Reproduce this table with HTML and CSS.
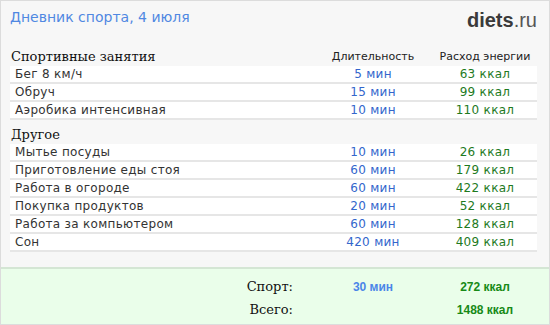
FILE: index.html
```html
<!DOCTYPE html>
<html lang="ru">
<head>
<meta charset="utf-8">
<title>Дневник спорта</title>
<link rel="stylesheet" href="styles.css">
</head>
<body>
<div class="page">
  <div class="top">
    <div class="title">Дневник спорта, 4 июля</div>
    <div class="logo"><b>diets</b>.ru</div>
  </div>

  <div class="section">
    <div class="head">
      <div class="head-name">Спортивные занятия</div>
      <div class="col">Длительность</div>
      <div class="col">Расход энергии</div>
    </div>
    <div class="row"><div class="name">Бег 8 км/ч</div><div class="dur">5 мин</div><div class="kcal">63 ккал</div></div>
    <div class="row"><div class="name">Обруч</div><div class="dur">15 мин</div><div class="kcal">99 ккал</div></div>
    <div class="row"><div class="name">Аэробика интенсивная</div><div class="dur">10 мин</div><div class="kcal">110 ккал</div></div>
  </div>

  <div class="section">
    <div class="head head-other">
      <div class="head-name">Другое</div>
    </div>
    <div class="row"><div class="name">Мытье посуды</div><div class="dur">10 мин</div><div class="kcal">26 ккал</div></div>
    <div class="row"><div class="name">Приготовление еды стоя</div><div class="dur">60 мин</div><div class="kcal">179 ккал</div></div>
    <div class="row"><div class="name">Работа в огороде</div><div class="dur">60 мин</div><div class="kcal">422 ккал</div></div>
    <div class="row"><div class="name">Покупка продуктов</div><div class="dur">20 мин</div><div class="kcal">52 ккал</div></div>
    <div class="row"><div class="name">Работа за компьютером</div><div class="dur">60 мин</div><div class="kcal">128 ккал</div></div>
    <div class="row"><div class="name">Сон</div><div class="dur">420 мин</div><div class="kcal">409 ккал</div></div>
  </div>

  <div class="footer">
    <div class="sum">
      <div class="sum-label">Спорт:</div>
      <div class="sum-dur">30 мин</div>
      <div class="sum-kcal">272 ккал</div>
    </div>
    <div class="sum">
      <div class="sum-label">Всего:</div>
      <div class="sum-dur"></div>
      <div class="sum-kcal">1488 ккал</div>
    </div>
  </div>
</div>
</body>
</html>
```

FILE: styles.css
```css
html, body {
  margin: 0;
  padding: 0;
  background: #ffffff;
}

.page {
  width: 550px;
  height: 325px;
  box-sizing: border-box;
  border: 1px solid #dcdcdc;
  background: #f7f7f7;
  display: flex;
  flex-direction: column;
  font-family: "DejaVu Sans", Verdana, sans-serif;
}

.top {
  display: flex;
  justify-content: space-between;
  align-items: flex-start;
  padding: 6px 12px 0 9px;
  height: 30px;
}

.title {
  font-size: 14px;
  color: #5088e2;
  line-height: 20px;
}

.logo {
  font-family: "Liberation Sans", Arial, sans-serif;
  font-size: 20px;
  color: #555;
  line-height: 22px;
  padding-top: 2px;
}

.logo b {
  color: #3a3a3a;
  font-weight: bold;
}

.section {
  padding: 0 12px 0 9px;
}

.head {
  display: grid;
  grid-template-columns: 1fr 120px 104px;
  align-items: end;
  height: 29px;
  padding-bottom: 2px;
  box-sizing: border-box;
}

.head-other {
  height: 24px;
}

.head-name {
  font-family: "DejaVu Serif", Georgia, serif;
  font-size: 13px;
  color: #111;
  padding-left: 1px;
}

.col {
  font-size: 11px;
  color: #222;
  text-align: center;
  padding-bottom: 1px;
}

.row {
  display: grid;
  grid-template-columns: 1fr 120px 104px;
  align-items: center;
  height: 18px;
  box-sizing: border-box;
  background: #fff;
  border-bottom: 2px solid #e6e6e6;
  font-size: 12px;
  letter-spacing: 0.3px;
}

.name {
  color: #333;
  padding-left: 5px;
}

.dur {
  color: #3366cc;
  text-align: center;
}

.kcal {
  color: #1e7a1e;
  text-align: center;
}

.footer {
  margin-top: auto;
  height: 57px;
  box-sizing: border-box;
  border-top: 2px solid #d4e6d4;
  background: #eafeea;
  padding: 6px 12px 0 9px;
}

.sum {
  display: grid;
  grid-template-columns: 1fr 120px 104px;
  align-items: center;
  height: 23px;
}

.sum-label {
  font-family: "DejaVu Serif", Georgia, serif;
  font-size: 13px;
  color: #111;
  text-align: right;
  padding-right: 20px;
}

.sum-dur {
  font-family: "Liberation Sans", Arial, sans-serif;
  font-weight: bold;
  font-size: 12px;
  color: #4a86e8;
  text-align: center;
}

.sum-kcal {
  font-family: "Liberation Sans", Arial, sans-serif;
  font-weight: bold;
  font-size: 12px;
  color: #178a17;
  text-align: center;
}
```
